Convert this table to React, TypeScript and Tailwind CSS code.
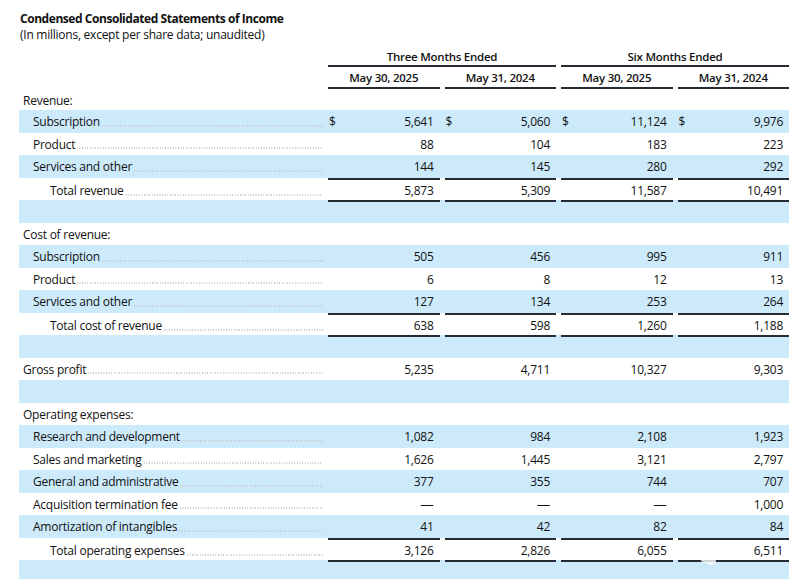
import React from "react";

type Row = {
  label?: string;
  indent?: 0 | 1 | 2;
  vals?: string[];
  dollar?: boolean;
  band?: boolean;
  lines?: boolean;
  head?: boolean;
  h?: string;
};

const rows: Row[] = [
  { label: "Revenue:", indent: 0, head: true, h: "h-[21px]" },
  { label: "Subscription", indent: 1, vals: ["5,641", "5,060", "11,124", "9,976"], dollar: true, band: true },
  { label: "Product", indent: 1, vals: ["88", "104", "183", "223"] },
  { label: "Services and other", indent: 1, vals: ["144", "145", "280", "292"], band: true },
  { label: "Total revenue", indent: 2, vals: ["5,873", "5,309", "11,587", "10,491"], lines: true },
  { band: true },
  { label: "Cost of revenue:", indent: 0, head: true },
  { label: "Subscription", indent: 1, vals: ["505", "456", "995", "911"], band: true },
  { label: "Product", indent: 1, vals: ["6", "8", "12", "13"] },
  { label: "Services and other", indent: 1, vals: ["127", "134", "253", "264"], band: true },
  { label: "Total cost of revenue", indent: 2, vals: ["638", "598", "1,260", "1,188"], lines: true },
  { band: true },
  { label: "Gross profit", indent: 0, vals: ["5,235", "4,711", "10,327", "9,303"] },
  { band: true },
  { label: "Operating expenses:", indent: 0, head: true },
  { label: "Research and development", indent: 1, vals: ["1,082", "984", "2,108", "1,923"], band: true },
  { label: "Sales and marketing", indent: 1, vals: ["1,626", "1,445", "3,121", "2,797"] },
  { label: "General and administrative", indent: 1, vals: ["377", "355", "744", "707"], band: true },
  { label: "Acquisition termination fee", indent: 1, vals: ["—", "—", "—", "1,000"] },
  { label: "Amortization of intangibles", indent: 1, vals: ["41", "42", "82", "84"], band: true },
  { label: "Total operating expenses", indent: 2, vals: ["3,126", "2,826", "6,055", "6,511"], lines: true },
  { band: true },
];

const indentCls = ["pl-[4px]", "pl-[14px]", "pl-[31px]"];

function TableRow({ r }: { r: Row }) {
  const bg = r.band ? "bg-[#cdeafb]" : "bg-white";
  const h = r.h ?? "h-[22.5px]";
  return (
    <div className={`grid grid-cols-[304px_repeat(4,1fr)] ${h} ${bg}`}>
      <div className={`flex items-center ${indentCls[r.indent ?? 0]} min-w-0 pt-[2px]`}>
        {r.label && (
          <>
            <span className="whitespace-nowrap">{r.label}</span>
            {!r.head && (
              <span className="flex-1 self-end mb-[6px] ml-[1px] h-[2px] bg-[radial-gradient(circle,#c4c4c4_0.55px,transparent_0.8px)] bg-[length:2.6px_2px] bg-repeat-x" />
            )}
          </>
        )}
      </div>
      {r.vals &&
        r.vals.map((v, i) => (
          <div key={i} className="pl-[5px] h-full">
            <div
              className={`flex items-center justify-between h-full pr-[6px] pt-[2px] ${
                r.lines ? "border-y-2 border-[#262c33]" : ""
              }`}
            >
              <span className="pl-[1px]">{r.dollar ? "$" : ""}</span>
              {v === "—" ? <span className="text-[13.5px] leading-none">{v}</span> : <span>{v}</span>}
            </div>
          </div>
        ))}
    </div>
  );
}

export default function App() {
  return (
    <div
      className="relative w-[808px] h-[579px] overflow-hidden bg-white text-[#111111] text-[12px] tracking-[-0.25px]"
      style={{ fontFamily: "'Open Sans', 'Noto Sans', sans-serif" }}
    >
      <div className="pt-[11px] pl-[20px]">
        <div className="font-bold leading-[16px] text-[12px] tracking-[-0.45px]">
          Condensed Consolidated Statements of Income
        </div>
        <div className="leading-[16px] text-[12px]">(In millions, except per share data; unaudited)</div>
      </div>
      <div className="ml-[19px] w-[770px] mt-[4px]">
        <div className="grid grid-cols-[304px_repeat(4,1fr)] h-[20px]">
          <div />
          <div className="col-span-2 pl-[5px] h-full">
            <div className="h-full border-b-2 border-[#262c33] flex items-center justify-center font-semibold text-[11.5px] pt-[1px]">
              Three Months Ended
            </div>
          </div>
          <div className="col-span-2 pl-[5px] h-full">
            <div className="h-full border-b-2 border-[#262c33] flex items-center justify-center font-semibold text-[11.5px] pt-[1px]">
              Six Months Ended
            </div>
          </div>
        </div>
        <div className="grid grid-cols-[304px_repeat(4,1fr)] h-[22px]">
          <div />
          {["May 30, 2025", "May 31, 2024", "May 30, 2025", "May 31, 2024"].map((d, i) => (
            <div key={i} className="pl-[5px] h-full">
              <div className="h-full border-b-2 border-[#262c33] flex items-center justify-center font-semibold text-[11.5px] pt-[2px]">
                {d}
              </div>
            </div>
          ))}
        </div>
        {rows.map((r, i) => (
          <TableRow key={i} r={r} />
        ))}
      </div>
      <div className="absolute left-[700px] top-[552px] flex items-center gap-[3px] opacity-80">
        <svg width="16" height="14" viewBox="0 0 16 14">
          <ellipse cx="6" cy="6" rx="6" ry="5" fill="white" />
          <ellipse cx="11" cy="9" rx="5" ry="4" fill="white" />
        </svg>
      </div>
    </div>
  );
}
